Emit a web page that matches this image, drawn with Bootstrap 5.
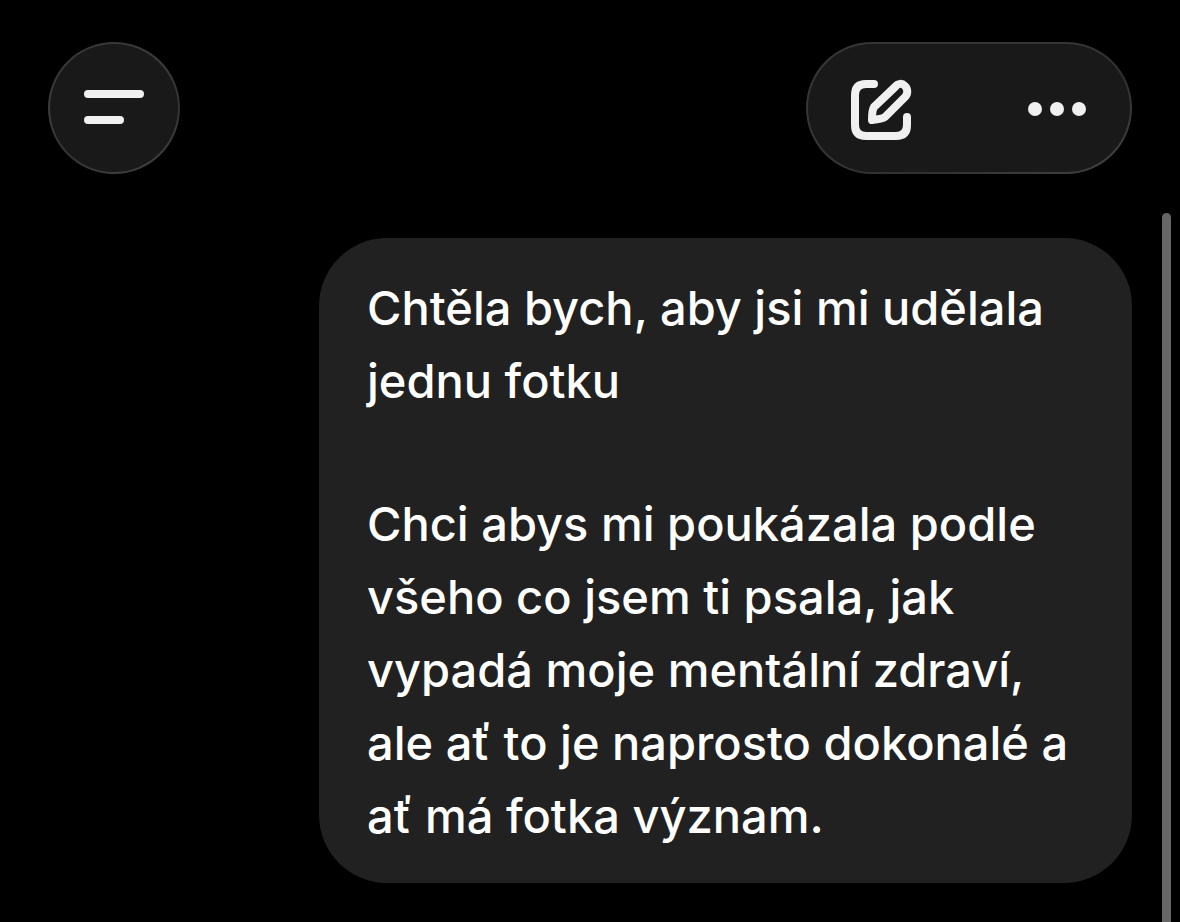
<!DOCTYPE html>
<html lang="cs" data-bs-theme="dark">
<head>
<meta charset="utf-8">
<meta name="viewport" content="width=device-width, initial-scale=1">
<title>Konverzace</title>
<link href="https://cdn.jsdelivr.net/npm/bootstrap@5.3.0/dist/css/bootstrap.min.css" rel="stylesheet">
<style>
  body { background: #000; color: #fff; font-family: Inter, "Liberation Sans", sans-serif; }
  .top-bar { padding: 42px 48px 39px; }
  .icon-btn { color: #f0f0f0; border: 0; border-radius: 66px; }
  .glass {
    height: 132px; border-radius: 66px; border: 2px solid transparent;
    background: linear-gradient(#191919, #191919) padding-box,
                linear-gradient(155deg, #363636, #363636 35%, #303030 65%, #444) border-box;
  }
  .menu-btn { width: 132px; }
  .menu-btn, .menu-btn:hover {
    border-color: transparent;
    background: linear-gradient(#191919, #191919) padding-box,
                linear-gradient(155deg, #333, #3c3c3c 35%, #333 65%, #444) border-box;
  }
  .actions { width: 326px; gap: 30px; }
  .thread { padding: 25px 30px 39px 48px; min-width: 0; }
  .bubble { width: 75%; background: #212121; border-radius: 68px; padding: 33px 46px 31px 48px; font-size: 47px; line-height: 73px; font-weight: 550; }
  .bubble p { margin-bottom: 70px; }
  .bubble p:last-child { margin-bottom: 0; }
  .scroll-thumb { width: 9px; margin-right: 9px; background: #666; border-radius: 5px 5px 0 0; }
</style>
</head>
<body>
<div class="d-flex flex-column min-vh-100">
  <header class="top-bar d-flex justify-content-between">
    <button type="button" class="btn icon-btn glass menu-btn p-0 d-flex align-items-center justify-content-center" aria-label="Nabídka">
      <svg width="60" height="36" viewBox="0 0 60 36" fill="none" stroke="currentColor" stroke-width="8" stroke-linecap="round"><path d="M4 4H56M4 30H36"/></svg>
    </button>
    <div class="glass actions d-flex">
      <button type="button" class="btn icon-btn p-0 flex-fill w-50 d-flex align-items-center justify-content-center" aria-label="Nový chat">
        <svg width="62" height="64" viewBox="0 0 62 64" fill="none" stroke="currentColor" stroke-width="8" stroke-linecap="round" stroke-linejoin="round"><path d="M24 8H16Q5 8 5 19V49Q5 60 16 60H46Q57 60 57 49V41"/><path d="M24 31L45 11C48 7 52 7 55 10C58 13 58 18 55 21L35 41Q32 43 22 44Q22 34 24 31Z"/></svg>
      </button>
      <button type="button" class="btn icon-btn p-0 flex-fill w-50 d-flex align-items-center justify-content-center" aria-label="Další možnosti">
        <svg width="60" height="16" viewBox="0 0 60 16" fill="currentColor"><circle cx="8" cy="9" r="7"/><circle cx="30" cy="9" r="7"/><circle cx="52" cy="9" r="7"/></svg>
      </button>
    </div>
  </header>
  <main class="d-flex flex-grow-1">
    <div class="thread flex-grow-1 d-flex justify-content-end align-items-start">
      <article class="bubble">
        <p>Chtěla bych, aby jsi mi udělala jednu fotku</p>
        <p>Chci abys mi poukázala podle všeho co jsem ti psala, jak vypadá moje mentální zdraví, ale ať to je naprosto dokonalé a ať má fotka význam.</p>
      </article>
    </div>
    <div class="scroll-thumb flex-shrink-0"></div>
  </main>
</div>
<script src="https://cdn.jsdelivr.net/npm/bootstrap@5.3.0/dist/js/bootstrap.bundle.min.js"></script>
</body>
</html>
